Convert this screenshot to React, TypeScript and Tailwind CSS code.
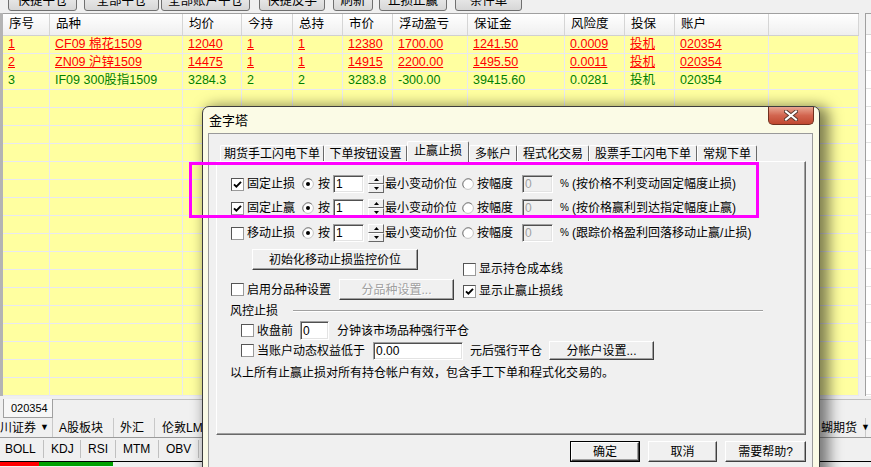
import React from "react";

// Background order table plus the modal 金字塔 settings dialog on the 止赢止损 tab.

const cols = [
    { title: "序号", w: "w-[47px]" },
    { title: "品种", w: "w-[133px]" },
    { title: "均价", w: "w-[59px]" },
    { title: "今持", w: "w-[51px]" },
    { title: "总持", w: "w-[50px]" },
    { title: "市价", w: "w-[50px]" },
    { title: "浮动盈亏", w: "w-[75px]" },
    { title: "保证金", w: "w-[97px]" },
    { title: "风险度", w: "w-[60px]" },
    { title: "投保", w: "w-[50px]" },
    { title: "账户", w: "w-[94px]" },
    { title: "", w: "flex-1" },
];

const rows = [
    ["1", "CF09 棉花1509", "12040", "1", "1", "12380", "1700.00", "1241.50", "0.0009", "投机", "020354", ""],
    ["2", "ZN09 沪锌1509", "14475", "1", "1", "14915", "2200.00", "1495.50", "0.0011", "投机", "020354", ""],
    ["3", "IF09 300股指1509", "3284.3", "2", "2", "3283.8", "-300.00", "39415.60", "0.0281", "投机", "020354", ""],
];

const topButtons = [
    { t: "快捷平仓", c: "ml-[8px] w-[69px]" },
    { t: "全部平仓", c: "ml-[7px] w-[75px]" },
    { t: "全部账户平仓", c: "ml-[2px] w-[89px]" },
    { t: "快捷反手", c: "ml-[9px] w-[66px]" },
    { t: "刷新", c: "ml-[8px] w-[40px]" },
    { t: "止损止赢", c: "ml-[6px] w-[68px]" },
    { t: "条件单", c: "ml-[8px] w-[67px]" },
];

const tabs = [
    { t: "期货手工闪电下单", w: "w-[104px]" },
    { t: "下单按钮设置", w: "w-[83px]" },
    { t: "止赢止损", w: "w-[62px]", on: true },
    { t: "多帐户", w: "w-[48px]" },
    { t: "程式化交易", w: "w-[72px]" },
    { t: "股票手工闪电下单", w: "w-[108px]" },
    { t: "常规下单", w: "w-[60px]" },
];

function Check({ on }: { on?: boolean }) {
    return (
        <span className="flex h-[13px] w-[13px] shrink-0 items-center justify-center border border-t-[#555] border-l-[#555] border-r-[#9a9a9a] border-b-[#9a9a9a] bg-white">
            {on && (
                <svg width="9" height="9" viewBox="0 0 9 9">
                    <path d="M1 4.3 L3.4 6.7 L8 1.9" fill="none" stroke="#000" strokeWidth="1.9" />
                </svg>
            )}
        </span>
    );
}

function Radio({ on }: { on?: boolean }) {
    return (
        <svg width="12" height="12" viewBox="0 0 12 12" className="shrink-0">
            <circle cx="6" cy="6" r="5.4" fill="#fff" stroke="#c4c4c4" />
            <path d="M2.2 9.8 A5.4 5.4 0 0 1 9.8 2.2" fill="none" stroke="#7a7a7a" strokeWidth="1" />
            {on && <circle cx="6" cy="6" r="2" fill="#000" />}
        </svg>
    );
}

function Field({ v, cls, dim }: { v: string; cls: string; dim?: boolean }) {
    return (
        <span
            className={`flex shrink-0 items-center border border-t-[#a0a0a0] border-l-[#a0a0a0] border-r-white border-b-white pl-[2px] shadow-[inset_1px_1px_0_#505050,inset_-1px_-1px_0_#e3e3e3] ${
                dim ? "bg-[#f0f0f0] text-[#a0a0a0]" : "bg-white text-black"
            } ${cls}`}
        >
            {v}
        </span>
    );
}

function Spin() {
    return (
        <span className="ml-[4px] flex h-[18px] w-[16px] shrink-0 flex-col">
            <span className="flex flex-1 items-center justify-center border border-t-white border-l-white border-r-[#696969] border-b-[#696969] bg-[#f0f0f0]">
                <svg width="5" height="3" viewBox="0 0 5 3">
                    <path d="M0 3 L2.5 0 L5 3Z" fill="#000" />
                </svg>
            </span>
            <span className="flex flex-1 items-center justify-center border border-t-white border-l-white border-r-[#696969] border-b-[#696969] bg-[#f0f0f0]">
                <svg width="5" height="3" viewBox="0 0 5 3">
                    <path d="M0 0 L2.5 3 L5 0Z" fill="#000" />
                </svg>
            </span>
        </span>
    );
}

function Btn({ children, cls, dim }: { children: React.ReactNode; cls: string; dim?: boolean }) {
    return (
        <span
            className={`flex shrink-0 items-center justify-center border border-t-white border-l-white border-r-[#404040] border-b-[#404040] bg-[#f0f0f0] shadow-[inset_-1px_-1px_0_#a0a0a0] ${
                dim ? "text-[#a0a0a0] [text-shadow:1px_1px_0_#fff]" : "text-black"
            } ${cls}`}
        >
            {children}
        </span>
    );
}

function StopRow({ label, on, note, mt }: { label: string; on?: boolean; note: string; mt: string }) {
    return (
        <div className={`flex h-[18px] items-center ${mt}`}>
            <Check on={on} />
            <span className="ml-[3px]">{label}</span>
            <span className="ml-[7px] flex">
                <Radio on />
            </span>
            <span className="ml-[4px]">按</span>
            <Field v="1" cls="ml-[3px] h-[18px] w-[31px]" />
            <Spin />
            <span className="ml-[1px]">最小变动价位</span>
            <span className="ml-[5px] flex">
                <Radio />
            </span>
            <span className="ml-[3px]">按幅度</span>
            <Field v="0" dim cls="ml-[9px] h-[18px] w-[31px]" />
            <span className="ml-[7px] w-[8px] text-[10px]">%</span>
            <span className="ml-[4px]">{note}</span>
        </div>
    );
}

function Table() {
    return (
        <div className="flex w-[856px] flex-col border-t border-[#a0a0a0] bg-[#ffffa0] text-[12.5px]">
            <div className="flex h-[22px] border-b border-[#d0d0d0] bg-gradient-to-b from-white to-[#efefef]">
                {cols.map((c, i) => (
                    <div key={i} className={`${c.w} flex items-center border-r border-[#d5d5d5] pl-[6px]`}>
                        {c.title}
                    </div>
                ))}
            </div>
            {Array.from({ length: 20 }).map((_, r) => {
                const data = rows[r];
                const color = r < 2 ? "text-[#ff0000] underline" : "text-[#008000]";
                return (
                    <div key={r} className="flex h-[18px] border-b border-[#e8e8f2]">
                        {cols.map((c, i) => (
                            <div key={i} className={`${c.w} flex items-center border-r border-[#e8e8f2] pl-[5px] ${color}`}>
                                {data ? data[i] : ""}
                            </div>
                        ))}
                    </div>
                );
            })}
        </div>
    );
}

function SidePanel() {
    return (
        <div className="flex w-[12px]">
            <div className="w-[6px]" />
            <div className="flex flex-1 flex-col border-l border-t border-[#a0a0a0] bg-white">
                <div className="h-[21px] border-b border-[#d5d5d5] bg-[#f4f4f4]" />
                {Array.from({ length: 20 }).map((_, i) => (
                    <div key={i} className="h-[18px] shrink-0 border-b border-[#e2e2e2]" />
                ))}
            </div>
        </div>
    );
}

function BottomBars() {
    return (
        <div className="flex flex-col">
            <div className="flex h-[22px]">
                <div className="ml-[3px] mt-[3px] flex h-[19px] w-[50px] items-center border-x border-b border-[#a0a0a0] bg-[#f7f7f7] pl-[7px] text-[11px]">
                    020354
                </div>
                <div className="mt-[3px] flex-1 border-t border-[#c0c0c0]" />
            </div>
            <div className="flex h-[20px] items-center border-b border-[#9a9a9a]">
                <div className="flex h-full w-[53px] items-center border-r border-[#c8c8c8]">
                    川证券<span className="ml-[4px] text-[9px]">▼</span>
                </div>
                <div className="flex h-full w-[61px] items-center border-r border-[#c8c8c8] pl-[6px]">A股板块</div>
                <div className="flex h-full w-[41px] items-center border-r border-[#c8c8c8] pl-[6px]">外汇</div>
                <div className="flex h-full w-[60px] items-center border-r border-[#c8c8c8] pl-[7px]">伦敦LME</div>
                <div className="ml-auto flex h-full w-[45px] items-center border-r border-[#c8c8c8]">
                    蝴期货<span className="ml-[4px] text-[9px]">▼</span>
                </div>
                <div className="w-[5px]" />
            </div>
            <div className="flex h-[21px] items-center">
                {[
                    ["BOLL", "w-[44px] pl-[5px]"],
                    ["KDJ", "w-[37px] pl-[7px]"],
                    ["RSI", "w-[35px] pl-[7px]"],
                    ["MTM", "w-[43px] pl-[7px]"],
                    ["OBV", "w-[40px] pl-[7px]"],
                    ["DMI", "w-[40px] pl-[7px]"],
                ].map(([t, c]) => (
                    <div key={t} className={`flex h-[18px] items-center border-r border-[#c0c0c0] ${c}`}>
                        {t}
                    </div>
                ))}
            </div>
            <div className="mt-[2px] flex h-[5px] border-t border-black">
                <span className="w-[39px] bg-[#ff0000]" />
                <span className="w-[74px] bg-[#00a000]" />
            </div>
        </div>
    );
}

function Dialog() {
    return (
        <div className="absolute left-[202px] top-[106px] flex h-[372px] w-[618px] flex-col rounded-t-[7px] border border-[#3c3c3c] bg-[#fbfbe6] shadow-[6px_3px_14px_3px_rgba(0,0,0,0.5)]">
            <div className="flex h-[26px] items-start justify-between">
                <span className="ml-[6px] mt-[6px] text-[13px] leading-[16px]">金字塔</span>
                <span className="mr-[5px] flex h-[18px] w-[46px] items-center justify-center rounded-b-[5px] border border-t-0 border-[#70301f] bg-gradient-to-b from-[#e8a592] via-[#d2654f] to-[#c0472f]">
                    <svg width="14" height="11" viewBox="0 0 14 11">
                        <path d="M2 1.5 L12 9.5 M12 1.5 L2 9.5" stroke="#5a3a30" strokeWidth="4" strokeLinecap="square" />
                        <path d="M2 1.5 L12 9.5 M12 1.5 L2 9.5" stroke="#fff" strokeWidth="2" strokeLinecap="square" />
                    </svg>
                </span>
            </div>
            <div className="ml-[5px] mr-[6px] flex flex-1 flex-col border border-[#9a9a9a] bg-[#f0f0f0] pl-[7px] pr-[6px] pt-[8px] text-[12px] leading-[16px]">
                <div className="flex h-[19px] items-end pl-[4px]">
                    {tabs.map((t) => (
                        <div
                            key={t.t}
                            className={`${t.w} relative z-10 flex items-center justify-center rounded-t-[2px] border-l border-t border-r border-l-white border-t-white border-r-[#696969] bg-[#f0f0f0] ${
                                t.on ? "-mb-[1px] h-[21px] pb-[3px]" : "h-[16px]"
                            }`}
                        >
                            {t.t}
                        </div>
                    ))}
                </div>
                <div className="h-[274px] w-[590px] border border-t-white border-l-white border-r-[#696969] border-b-[#696969] pl-[14px] pt-[13px] shadow-[inset_-1px_-1px_0_#a0a0a0]">
                    <StopRow label="固定止损" on note="(按价格不利变动固定幅度止损)" mt="" />
                    <StopRow label="固定止赢" on note="(按价格赢利到达指定幅度止赢)" mt="mt-[6px]" />
                    <StopRow label="移动止损" note="(跟踪价格盈利回落移动止赢/止损)" mt="mt-[7px]" />
                    <div className="mt-[7px] flex">
                        <div className="flex w-[232px] flex-col">
                            <Btn cls="ml-[21px] h-[21px] w-[166px]">初始化移动止损监控价位</Btn>
                            <div className="mt-[9px] flex h-[21px] items-center">
                                <Check />
                                <span className="ml-[3px]">启用分品种设置</span>
                                <Btn dim cls="ml-[8px] h-[21px] w-[115px]">
                                    分品种设置...
                                </Btn>
                            </div>
                        </div>
                        <div className="flex flex-col">
                            <div className="mt-[12px] flex h-[16px] items-center">
                                <Check />
                                <span className="ml-[3px]">显示持仓成本线</span>
                            </div>
                            <div className="mt-[6px] flex h-[16px] items-center">
                                <Check on />
                                <span className="ml-[3px]">显示止赢止损线</span>
                            </div>
                        </div>
                    </div>
                    <div className="mt-[3px] flex h-[16px] items-center">
                        <span className="-ml-[1px]">风控止损</span>
                        <span className="ml-[15px] h-[2px] w-[470px] border-y border-t-[#a0a0a0] border-b-white" />
                    </div>
                    <div className="mt-[2px] flex h-[19px] items-center">
                        <span className="ml-[10px] flex">
                            <Check />
                        </span>
                        <span className="ml-[3px]">收盘前</span>
                        <Field v="0" cls="ml-[7px] h-[19px] w-[29px]" />
                        <span className="ml-[8px]">分钟该市场品种强行平仓</span>
                    </div>
                    <div className="mt-[1px] flex h-[19px] items-center">
                        <span className="ml-[10px] flex">
                            <Check />
                        </span>
                        <span className="ml-[3px]">当账户动态权益低于</span>
                        <Field v="0.00" cls="ml-[8px] h-[18px] w-[90px]" />
                        <span className="ml-[7px]">元后强行平仓</span>
                        <Btn cls="ml-[7px] h-[19px] w-[105px]">分帐户设置...</Btn>
                    </div>
                    <div className="mt-[5px] flex h-[16px] items-center">
                        <span className="-ml-[1px]">以上所有止赢止损对所有持仓帐户有效，包含手工下单和程式化交易的。</span>
                    </div>
                </div>
                <div className="mt-[6px] flex justify-end gap-[8px]">
                    <span className="flex border border-black">
                        <Btn cls="h-[19px] w-[68px]">确定</Btn>
                    </span>
                    <Btn cls="h-[21px] w-[69px]">取消</Btn>
                    <Btn cls="h-[21px] w-[81px]">需要帮助?</Btn>
                </div>
            </div>
        </div>
    );
}

export default function App() {
    return (
        <div className="relative h-[467px] w-[871px] overflow-hidden whitespace-nowrap bg-[#f0f0f0] text-[12px] text-black [font-family:'Liberation_Sans','Noto_Sans_CJK_SC',sans-serif]">
            <div className="flex h-[13px] overflow-hidden">
                {topButtons.map((b) => (
                    <span
                        key={b.t}
                        className={`-mt-[9px] flex h-[20px] shrink-0 items-center justify-center rounded-[3px] border border-[#707070] bg-gradient-to-b from-[#f2f2f2] to-[#d6d6d6] text-[12.5px] ${b.c}`}
                    >
                        {b.t}
                    </span>
                ))}
            </div>
            <div className="flex h-[383px]">
                <div className="w-[3px] bg-[#b4b4b4]" />
                <Table />
                <SidePanel />
            </div>
            <BottomBars />
            <Dialog />
            {/* highlight drawn over the screenshot */}
            <div className="pointer-events-none absolute left-[189px] top-[162px] h-[56px] w-[570px] border-[3px] border-[#ff00ff]" />
        </div>
    );
}
